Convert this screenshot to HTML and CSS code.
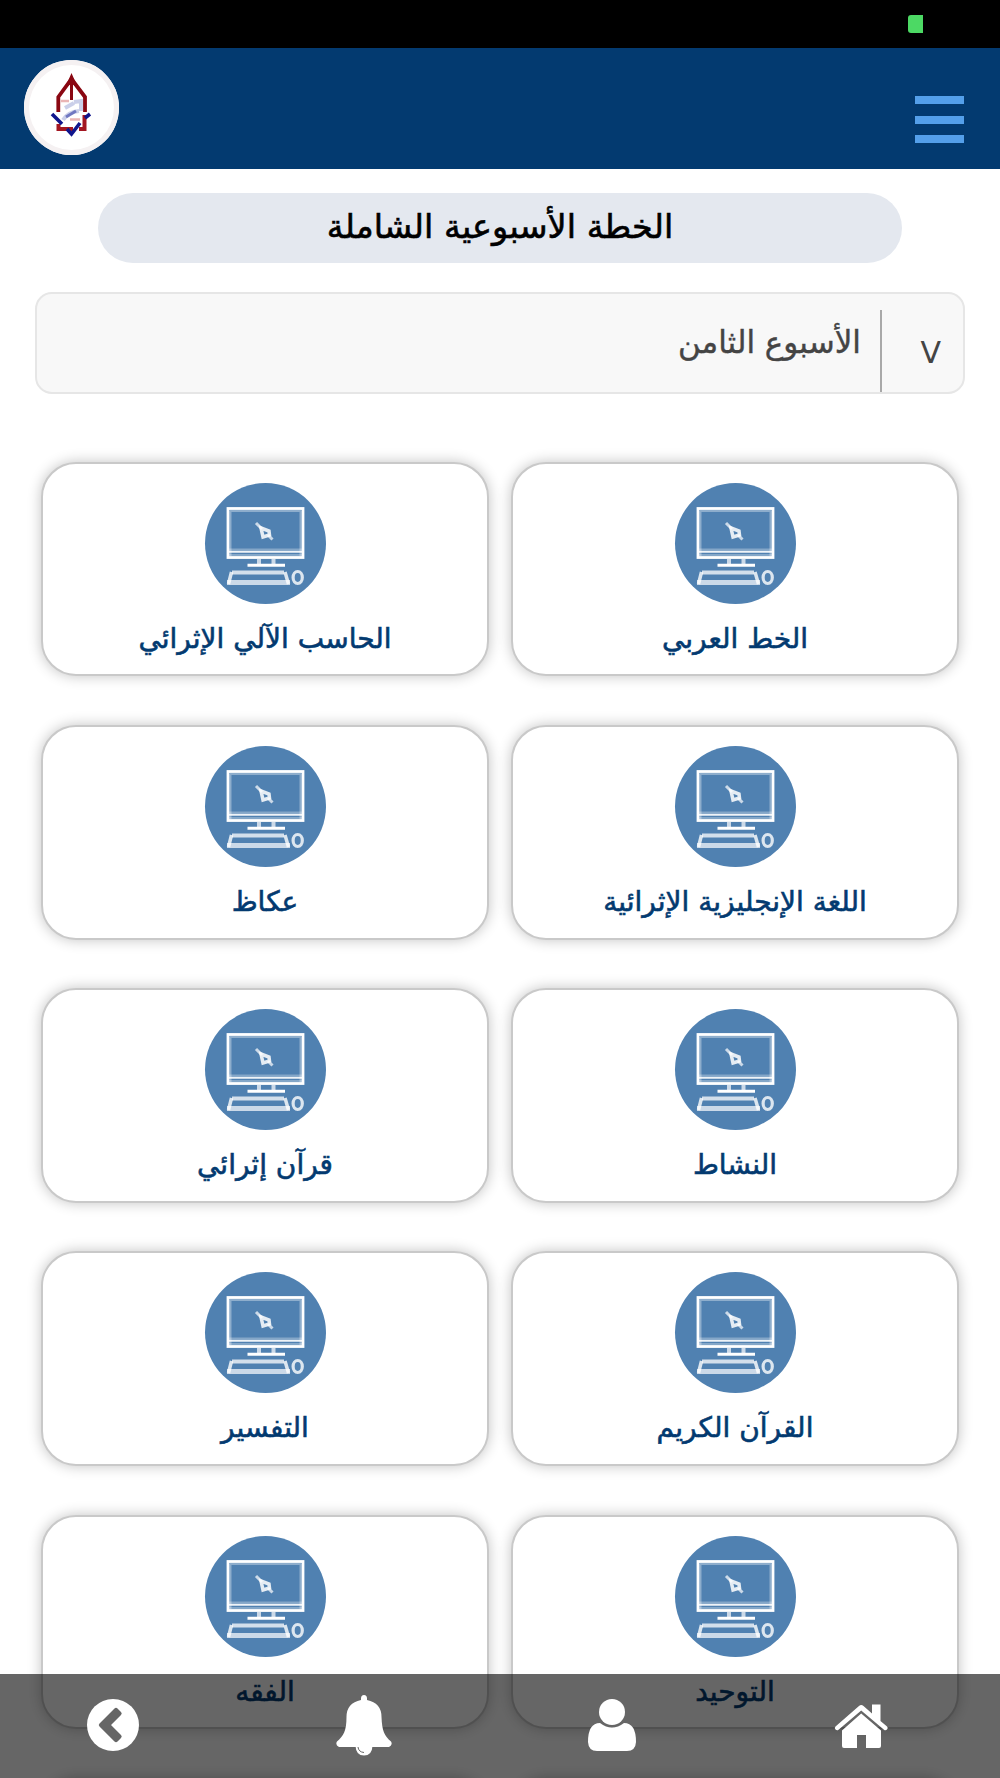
FILE: index.html
```html
<!DOCTYPE html>
<html lang="ar" dir="rtl">
<head>
    <meta charset="UTF-8">
    <meta name="viewport" content="width=device-width, initial-scale=1.0">
    <title>الخطة الأسبوعية الشاملة</title>
    <link rel="stylesheet" href="styles.css">
</head>
<body>
    <!-- Shared icon -->
    <svg class="icon-defs" width="0" height="0">
        <symbol id="computer" viewBox="0 0 121 121">
            <g fill="none" stroke="#fff">
                <rect x="23" y="25.500" width="75" height="49" stroke-width="2.800"/>
                <path d="M25 28H96M25.500 28V73M95.500 28V73" stroke-width="2" opacity=".35"/>
                <path d="M24 68.800H97" stroke-width="2" opacity=".9"/>
                <path d="M24 66.500H97M24 72H97" stroke-width="2" opacity=".3"/>
                <path d="M54 76V82M68.500 76V82" stroke-width="4" opacity=".7"/>
                <path d="M42.500 82.300H80" stroke-width="3"/>
                <path d="M27 89.500H79" stroke-width="4" opacity=".75"/>
                <path d="M22 99.500H85" stroke-width="5" opacity=".7"/>
                <path d="M26.500 89L23.500 101M80 89L83.500 101" stroke-width="3.500" opacity=".8"/>
                <ellipse cx="92.700" cy="94.500" rx="4.600" ry="6" stroke-width="3.200" opacity=".8"/>
                <path d="M56 45L64 48L64.500 52L58 54Z" stroke-width="3.500" opacity=".85"/>
                <path d="M51 40L57 46M63 52L67.500 56.500" stroke-width="3" opacity=".7"/>
            </g>
        </symbol>
    </svg>

    <div class="status-bar"><span class="battery"></span></div>

    <header class="header">
        <button type="button" class="menu-btn" aria-label="القائمة">
            <span></span>
            <span></span>
            <span></span>
        </button>
        <div class="logo">
            <svg viewBox="0 0 95 95" width="95" height="95" fill="none">
                <path d="M34.300 52V37L47.500 19L61 37V52" stroke="#8a0712" stroke-width="3.800"/>
                <path d="M47.500 13L54 28L49 24.500V40H46V24.500L41 28Z" fill="#8a0712"/>
                <path d="M37 41H45M46 59.500H56" stroke="#eab5b5" stroke-width="2.500"/>
                <path d="M39 60Q44 52 55 51M41 48L50 43M50 42L57 41V51" stroke="#7a88c8" stroke-width="4" opacity=".4"/>
                <path d="M42 57L52 51" stroke="#4a52b0" stroke-width="3" opacity=".7"/>
                <path d="M34.500 64V69H49M55 69H60.500V55" stroke="#a31621" stroke-width="4"/>
                <path d="M28 54L38 64M43 69L47.500 74L56 63M61 58L66 54" stroke="#10158c" stroke-width="3.600"/>
            </svg>
        </div>
    </header>

    <main class="content">
        <h1 class="page-title"><span>الخطة الأسبوعية الشاملة</span></h1>

        <div class="week-select">
            <span class="arrow">V</span>
            <span class="week-name">الأسبوع الثامن</span>
        </div>

        <div class="subjects">
            <a class="card">
                <span class="circle"><svg><use href="#computer"/></svg></span>
                <span class="name">الخط العربي</span>
            </a>
            <a class="card">
                <span class="circle"><svg><use href="#computer"/></svg></span>
                <span class="name">الحاسب الآلي الإثرائي</span>
            </a>
            <a class="card">
                <span class="circle"><svg><use href="#computer"/></svg></span>
                <span class="name">اللغة الإنجليزية الإثرائية</span>
            </a>
            <a class="card">
                <span class="circle"><svg><use href="#computer"/></svg></span>
                <span class="name">عكاظ</span>
            </a>
            <a class="card">
                <span class="circle"><svg><use href="#computer"/></svg></span>
                <span class="name">النشاط</span>
            </a>
            <a class="card">
                <span class="circle"><svg><use href="#computer"/></svg></span>
                <span class="name">قرآن إثرائي</span>
            </a>
            <a class="card">
                <span class="circle"><svg><use href="#computer"/></svg></span>
                <span class="name">القرآن الكريم</span>
            </a>
            <a class="card">
                <span class="circle"><svg><use href="#computer"/></svg></span>
                <span class="name">التفسير</span>
            </a>
            <a class="card">
                <span class="circle"><svg><use href="#computer"/></svg></span>
                <span class="name">التوحيد</span>
            </a>
            <a class="card">
                <span class="circle"><svg><use href="#computer"/></svg></span>
                <span class="name">الفقه</span>
            </a>
            <a class="card"></a>
            <a class="card"></a>
        </div>
    </main>

    <nav class="bottom-nav">
        <a class="nav-item">
            <svg viewBox="0 0 56 46" width="56" height="46" fill="#fff">
                <path d="M2.500 24.500L26 4Q28.200 2 30.500 4L39 11.500V2.500H47.500V19L54 24.500Q55.500 26 54 27.500Q52.500 29 51 27.800L28.200 8.500L5.500 27.800Q4 29 2.500 27.500Q1 26 2.500 24.500Z"/>
                <path d="M28.200 11.500L48 28.500V44Q48 46 46 46H33V33H24V46H11Q9 46 9 44V28.500Z"/>
            </svg>
        </a>
        <a class="nav-item">
            <svg viewBox="0 0 48 52" width="48" height="52" fill="#fff">
                <circle cx="24" cy="13" r="13"/>
                <path d="M12 24Q24 33 36 24Q48 24 48 43Q47.500 52 39 52H9Q.5 52 0 43Q0 24 12 24Z"/>
            </svg>
        </a>
        <a class="nav-item">
            <svg viewBox="0 0 56 61" width="56" height="61" fill="#fff">
                <path d="M28 0Q31 0 31 3.500V5Q45.500 8 45.500 22C46 36 48.500 41 55 46.500Q57 50 53 52H3Q-1 50 1 46.500C7.500 41 10.500 36 10.500 22Q10.500 8 25 5V3.500Q25 0 28 0Z"/>
                <path d="M19.500 51H36.500Q36 60.500 28 60.500T19.500 51Z"/>
                <path d="M22 52Q22.500 57 28 57.500" fill="none" stroke="#666" stroke-width="1"/>
            </svg>
        </a>
        <a class="nav-item">
            <svg viewBox="0 0 52 52" width="52" height="52">
                <circle cx="26" cy="26" r="26" fill="#fff"/>
                <path d="M27.500 9.500Q29 8 30.500 9.500L34 13Q35.500 14.500 34 16L24 26L34 36Q35.500 37.500 34 39L30.500 42.500Q29 44 27.500 42.500L12.500 27.500Q11 26 12.500 24.500Z" fill="#666"/>
            </svg>
        </a>
    </nav>
</body>
</html>
```
FILE: styles.css
```css
* {
    box-sizing: border-box;
}

html, body {
    height: 100%;
}

body {
    margin: 0;
    background-color: #fff;
    font-family: "DejaVu Sans", sans-serif;
    display: flex;
    flex-direction: column;
    overflow: hidden;
}

.icon-defs {
    position: absolute;
}

.status-bar {
    flex: none;
    height: 48px;
    background-color: #000;
    padding: 15px 77px;
}

.battery {
    display: block;
    width: 15px;
    height: 18px;
    background-color: #4cd964;
    border-radius: 3px 0 0 3px;
}

.header {
    flex: none;
    height: 121px;
    background-color: #033a70;
    padding: 12px 36px 0 24px;
    display: flex;
    justify-content: space-between;
    align-items: flex-start;
}

.menu-btn {
    background: none;
    border: none;
    padding: 0;
    margin-top: 36px;
    width: 49px;
    height: 47px;
    display: flex;
    flex-direction: column;
    justify-content: space-between;
}

.menu-btn span {
    height: 8px;
    width: 100%;
    background-color: #549fea;
}

.logo {
    width: 95px;
    height: 95px;
    border-radius: 50%;
    background-color: #fff;
    box-shadow: inset 0 0 0 5px #f5f1f2;
}

.logo svg {
    display: block;
}

.content {
    flex: 1;
    min-height: 0;
    overflow: hidden;
    padding: 24px 35px 0;
}

.page-title {
    width: 804px;
    height: 70px;
    margin: 0 auto 29px;
    border-radius: 35px;
    background-color: #e4e8ef;
    font-size: 33.5px;
    font-weight: normal;
    line-height: 68px;
    text-align: center;
    color: #000;
    -webkit-text-stroke: 0.6px;
}

.week-select {
    height: 102px;
    border: 2px solid #e6e6e6;
    border-radius: 17px;
    background-color: #f8f8f8;
    color: #444;
    font-size: 31px;
    display: flex;
}

.arrow {
    width: 83px;
    margin-top: 16px;
    border-left: 2px solid #a9a9a9;
    padding: 21px 22px 0 0;
    font-size: 30px;
    line-height: 44px;
}

.week-name {
    padding-right: 19px;
    line-height: 96px;
    -webkit-text-stroke: 0.4px;
}

.subjects {
    display: grid;
    grid-template-columns: 448px 448px;
    column-gap: 22px;
    row-gap: 48.5px;
    margin: 67.5px 6px 0 0;
}

.card {
    height: 214.800px;
    border: 2px solid #c9c9c9;
    border-radius: 35px;
    background-color: #fff;
    box-shadow: 0 0 14px rgba(0, 0, 0, 0.24);
    padding-top: 19px;
    display: flex;
    flex-direction: column;
    align-items: center;
}

.circle {
    width: 121px;
    height: 121px;
    border-radius: 50%;
    background-color: #5081b1;
}

.circle svg {
    display: block;
    width: 121px;
    height: 121px;
}

.name {
    margin-top: 11px;
    font-size: 28px;
    line-height: 48px;
    white-space: nowrap;
    color: #033a70;
    -webkit-text-stroke: 0.6px;
}

.bottom-nav {
    position: fixed;
    left: 0;
    right: 0;
    bottom: 0;
    height: 104px;
    background-color: rgba(0, 0, 0, 0.6);
    padding: 0 111px 2px 87px;
    display: flex;
    justify-content: space-between;
    align-items: center;
}

.nav-item svg {
    display: block;
}
```
